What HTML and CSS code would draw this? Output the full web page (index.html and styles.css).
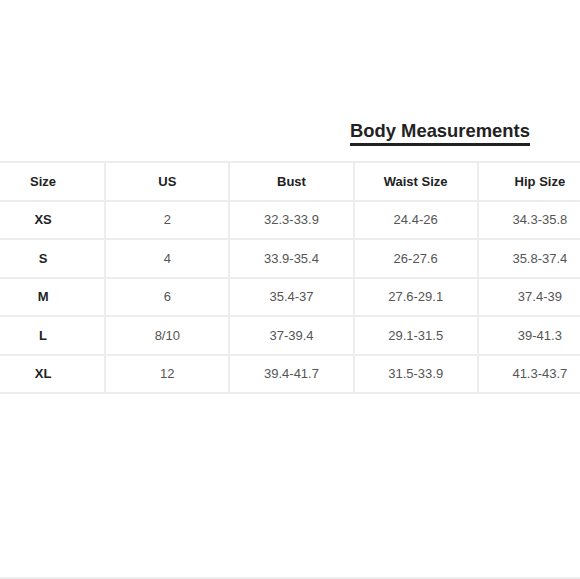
FILE: index.html
```html
<!DOCTYPE html>
<html>
<head>
<meta charset="utf-8">
<link rel="stylesheet" href="styles.css">
</head>
<body>
<div class="page">
  <h1 class="title">Body Measurements</h1>
  <table class="chart">
    <thead>
      <tr><th>Size</th><th>US</th><th>Bust</th><th>Waist Size</th><th>Hip Size</th></tr>
    </thead>
    <tbody>
      <tr><th>XS</th><td>2</td><td>32.3-33.9</td><td>24.4-26</td><td>34.3-35.8</td></tr>
      <tr><th>S</th><td>4</td><td>33.9-35.4</td><td>26-27.6</td><td>35.8-37.4</td></tr>
      <tr><th>M</th><td>6</td><td>35.4-37</td><td>27.6-29.1</td><td>37.4-39</td></tr>
      <tr><th>L</th><td>8/10</td><td>37-39.4</td><td>29.1-31.5</td><td>39-41.3</td></tr>
      <tr><th>XL</th><td>12</td><td>39.4-41.7</td><td>31.5-33.9</td><td>41.3-43.7</td></tr>
    </tbody>
  </table>
</div>
</body>
</html>
```
FILE: styles.css
```css
html, body {
  margin: 0;
  padding: 0;
  background: #fff;
}
.page {
  box-sizing: border-box;
  width: 580px;
  height: 579px;
  overflow: hidden;
  border-bottom: 2px solid #ececec;
  font-family: "Liberation Sans", Arial, sans-serif;
  padding-top: 120px;
}
.title {
  margin: 0 0 15px 350px;
  font-size: 18.4px;
  font-weight: bold;
  color: #222;
  line-height: 22px;
  display: inline-block;
  border-bottom: 3px solid #222;
  padding-bottom: 1px;
}
.chart {
  margin-left: -20px;
  width: 623px;
  border-collapse: collapse;
  table-layout: fixed;
}
.chart th, .chart td {
  border: 2px solid #ededed;
  height: 36.5px;
  padding: 0;
  text-align: center;
  font-size: 13px;
}
.chart th {
  color: #222;
  font-weight: bold;
}
.chart td {
  color: #555;
}
```
